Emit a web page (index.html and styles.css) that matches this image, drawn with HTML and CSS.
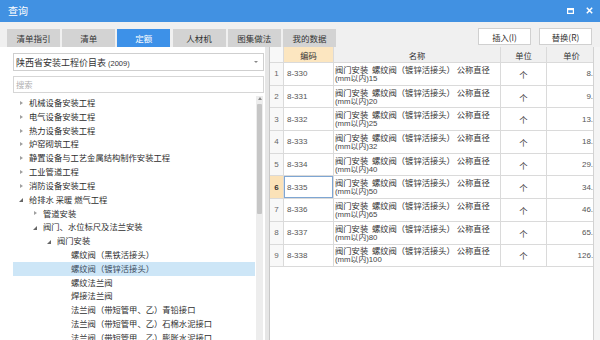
FILE: index.html
```html
<!DOCTYPE html>
<html lang="zh-CN">
<head>
<meta charset="utf-8">
<title>查询</title>
<link rel="stylesheet" href="styles.css">
</head>
<body>
<div class="dialog">
  <header class="titlebar">
    <span class="title">查询</span>
    <div class="win-btns">
      <svg width="7" height="6" viewBox="0 0 7 6"><rect x="0.6" y="0.6" width="5.8" height="4.8" fill="none" stroke="#fff" stroke-width="1.2"/><rect x="0" y="0" width="7" height="2.2" fill="#fff"/></svg>
      <svg width="7" height="7" viewBox="0 0 7 7"><path d="M0.8 0.8L6.2 6.2M6.2 0.8L0.8 6.2" stroke="#fff" stroke-width="1.5"/></svg>
    </div>
  </header>

  <div class="toolbar">
    <nav class="tabs">
      <span class="tab">清单指引</span>
      <span class="tab">清单</span>
      <span class="tab active">定额</span>
      <span class="tab">人材机</span>
      <span class="tab">图集做法</span>
      <span class="tab">我的数据</span>
    </nav>
    <div class="actions">
      <button class="btn">插入(I)</button>
      <button class="btn">替换(R)</button>
    </div>
  </div>

  <div class="main">
    <section class="left">
      <div class="select"><span>陕西省安装工程价目表 <small>(2009)</small></span><span class="caret"></span></div>
      <div class="search">搜索</div>
      <div class="tree-wrap">
        <ul class="tree">
          <li class="l0"><i class="arw closed"></i>机械设备安装工程</li>
          <li class="l0"><i class="arw closed"></i>电气设备安装工程</li>
          <li class="l0"><i class="arw closed"></i>热力设备安装工程</li>
          <li class="l0"><i class="arw closed"></i>炉窑砌筑工程</li>
          <li class="l0"><i class="arw closed"></i>静置设备与工艺金属结构制作安装工程</li>
          <li class="l0"><i class="arw closed"></i>工业管道工程</li>
          <li class="l0"><i class="arw closed"></i>消防设备安装工程</li>
          <li class="l0"><i class="arw open"></i>给排水 采暖 燃气工程</li>
          <li class="l1"><i class="arw closed"></i>管道安装</li>
          <li class="l1"><i class="arw open"></i>阀门、水位标尺及法兰安装</li>
          <li class="l2"><i class="arw open"></i>阀门安装</li>
          <li class="l3"><i class="arw"></i>螺纹阀（黑铁活接头）</li>
          <li class="l3 selected"><i class="arw"></i>螺纹阀（镀锌活接头）</li>
          <li class="l3"><i class="arw"></i>螺纹法兰阀</li>
          <li class="l3"><i class="arw"></i>焊接法兰阀</li>
          <li class="l3"><i class="arw"></i>法兰阀（带短管甲、乙）青铅接口</li>
          <li class="l3"><i class="arw"></i>法兰阀（带短管甲、乙）石棉水泥接口</li>
          <li class="l3"><i class="arw"></i>法兰阀（带短管甲、乙）膨胀水泥接口</li>
        </ul>
        <div class="vscroll"><span class="up"></span><span class="thumb"></span></div>
      </div>
    </section>

    <div class="splitter"></div>

    <section class="grid">
      <div class="grid-view">
        <div class="row head">
          <div class="num"></div>
          <div class="hcode">编码</div>
          <div>名称</div>
          <div>单位</div>
          <div class="hprice">单价</div>
        </div>
        <div class="row"><div class="num">1</div><div class="code">8-330</div><div class="name"><span>阀门安装&nbsp; 螺纹阀（镀锌活接头） 公称直径</span><span class="lat">(mm以内)15</span></div><div class="unit">个</div><div class="price">8.12</div></div>
        <div class="row"><div class="num">2</div><div class="code">8-331</div><div class="name"><span>阀门安装&nbsp; 螺纹阀（镀锌活接头） 公称直径</span><span class="lat">(mm以内)20</span></div><div class="unit">个</div><div class="price">9.14</div></div>
        <div class="row"><div class="num">3</div><div class="code">8-332</div><div class="name"><span>阀门安装&nbsp; 螺纹阀（镀锌活接头） 公称直径</span><span class="lat">(mm以内)25</span></div><div class="unit">个</div><div class="price">13.16</div></div>
        <div class="row"><div class="num">4</div><div class="code">8-333</div><div class="name"><span>阀门安装&nbsp; 螺纹阀（镀锌活接头） 公称直径</span><span class="lat">(mm以内)32</span></div><div class="unit">个</div><div class="price">18.17</div></div>
        <div class="row"><div class="num">5</div><div class="code">8-334</div><div class="name"><span>阀门安装&nbsp; 螺纹阀（镀锌活接头） 公称直径</span><span class="lat">(mm以内)40</span></div><div class="unit">个</div><div class="price">29.58</div></div>
        <div class="row"><div class="num sel">6</div><div class="code focus">8-335</div><div class="name"><span>阀门安装&nbsp; 螺纹阀（镀锌活接头） 公称直径</span><span class="lat">(mm以内)50</span></div><div class="unit">个</div><div class="price">34.17</div></div>
        <div class="row"><div class="num">7</div><div class="code">8-336</div><div class="name"><span>阀门安装&nbsp; 螺纹阀（镀锌活接头） 公称直径</span><span class="lat">(mm以内)65</span></div><div class="unit">个</div><div class="price">46.21</div></div>
        <div class="row"><div class="num">8</div><div class="code">8-337</div><div class="name"><span>阀门安装&nbsp; 螺纹阀（镀锌活接头） 公称直径</span><span class="lat">(mm以内)80</span></div><div class="unit">个</div><div class="price">65.54</div></div>
        <div class="row"><div class="num">9</div><div class="code">8-338</div><div class="name"><span>阀门安装&nbsp; 螺纹阀（镀锌活接头） 公称直径</span><span class="lat">(mm以内)100</span></div><div class="unit">个</div><div class="price">126.19</div></div>
      </div>
      <div class="grid-scroll"></div>
    </section>
  </div>
</div>
</body>
</html>
```

FILE: styles.css
```css
* { box-sizing: border-box; margin: 0; padding: 0; }

html, body {
  width: 600px;
  height: 340px;
  overflow: hidden;
}

body {
  font-family: "Noto Sans CJK SC", "Liberation Sans", sans-serif;
  color: #333;
  background: #f0f0f0;
}

.dialog {
  display: flex;
  flex-direction: column;
  height: 340px;
}

/* title bar */
.titlebar {
  height: 22px;
  flex: none;
  background: #4191e2;
  color: #fff;
  display: flex;
  align-items: center;
  justify-content: space-between;
  padding: 0 7px 0 8px;
}
.title { font-size: 10px; line-height: 22px; }
.win-btns { display: flex; align-items: center; gap: 12px; padding-bottom: 1px; }
.win-btns svg { display: block; }

/* toolbar with tabs */
.toolbar {
  height: 25px;
  flex: none;
  display: flex;
  justify-content: space-between;
  padding: 0 8px 0 7px;
  background: #f0f0f0;
}
.tabs { display: flex; gap: 2.2px; align-items: flex-end; }
.tab {
  width: 53px;
  height: 18px;
  background: #d3d3d3;
  color: #333;
  font-size: 8.5px;
  line-height: 18px;
  text-align: center;
}
.tab.active { background: #3d91e8; color: #fff; }

.actions { display: flex; gap: 8px; padding-top: 6px; }
.btn {
  width: 53px;
  height: 17px;
  background: #fff;
  border: 1px solid #d0d0d0;
  font-family: inherit;
  font-size: 8.3px;
  color: #333;
}

/* main area */
.main { flex: 1; display: flex; min-height: 0; }

.left {
  width: 265px;
  flex: none;
  background: #fff;
  padding: 6px 1px 0 13px;
  display: flex;
  flex-direction: column;
}

.select {
  height: 18px;
  flex: none;
  border: 1px solid #cfcfcf;
  display: flex;
  align-items: center;
  justify-content: space-between;
  padding: 0 5px 0 2px;
  font-size: 9px;
  color: #333;
}
.select small { font-family: "Liberation Sans", sans-serif; font-size: 7.5px; }
.caret {
  width: 0; height: 0;
  border-top: 2.5px solid #888;
  border-left: 2px solid transparent;
  border-right: 2px solid transparent;
}

.search {
  height: 17px;
  flex: none;
  margin-top: 5px;
  border: 1px solid #d6d6d6;
  font-size: 8.3px;
  line-height: 15px;
  color: #b0b0b0;
  padding-left: 2px;
}

.tree-wrap {
  flex: 1;
  display: flex;
  margin-top: 3px;
  margin-right: 1px;
  min-height: 0;
}

.tree { flex: 1; list-style: none; overflow: hidden; }
.tree li {
  height: 13.82px;
  font-size: 8.3px;
  line-height: 13.82px;
  display: flex;
  align-items: center;
  white-space: nowrap;
  margin-right: 1px;
  color: #2e2e2e;
}
.tree li.l0 { padding-left: 6px; }
.tree li.l1 { padding-left: 20px; }
.tree li.l2 { padding-left: 34px; }
.tree li.l3 { padding-left: 48px; }
.tree li.selected { background: #cde6f7; color: #3a4a5c; }

.arw { display: block; flex: none; width: 10px; height: 1px; }
.arw.closed {
  width: 0; height: 0;
  border-left: 3px solid #a0a0a0;
  border-top: 2.5px solid transparent;
  border-bottom: 2.5px solid transparent;
  margin: 0 6px 0 1px;
}
.arw.open {
  width: 0; height: 0;
  border-right: 4px solid #666;
  border-top: 4px solid transparent;
  margin: 1px 6px 0 0;
}

.vscroll {
  width: 7px;
  flex: none;
  background: #ededed;
  display: flex;
  flex-direction: column;
  align-items: center;
}
.vscroll .up {
  width: 0; height: 0;
  margin-top: 1px;
  border-bottom: 3px solid #8a8a8a;
  border-left: 2.5px solid transparent;
  border-right: 2.5px solid transparent;
}
.vscroll .thumb {
  width: 5px;
  height: 110px;
  margin-top: 4px;
  background: #c6c6c6;
  border-radius: 1px;
}

.splitter { width: 4px; flex: none; background: #e6e6e6; }

/* grid */
.grid {
  flex: 1;
  display: flex;
  background: #fff;
  border-left: 1px solid #c8c8c8;
  min-width: 0;
}
.grid-view { flex: 1; overflow: hidden; min-width: 0; }
.grid-scroll {
  width: 7px;
  flex: none;
  background: #f4f4f4;
  border-left: 1px solid #d2d2d2;
}

.row {
  display: grid;
  grid-template-columns: 14px 50px 167px 46px 56px;
  width: 333px;
  height: 22.7px;
  font-size: 8.3px;
  color: #333;
}
.row > div {
  border-right: 1px solid #dadada;
  border-bottom: 1px solid #dadada;
  display: flex;
  align-items: center;
  overflow: hidden;
  white-space: nowrap;
}
.row.head { height: 16px; background: #f0f0f0; }
.row.head > div { justify-content: center; }
.row.head .hcode { background: #fce6c0; }
.row.head .hprice { padding-right: 6px; }

.num {
  justify-content: center;
  background: #f8f8f8;
  color: #666;
  font-family: "Liberation Sans", sans-serif;
  font-size: 8px;
}
.num.sel { background: #fbe2b8; color: #333; font-weight: bold; }

.code {
  padding-left: 3px;
  font-family: "Liberation Sans", sans-serif;
  font-size: 8px;
  color: #555;
}
.code.focus { box-shadow: inset 0 0 0 1px #7ea6d3; }

.name {
  flex-direction: column;
  align-items: flex-start !important;
  justify-content: center;
  padding-left: 1px;
  line-height: 10px;
}
.name .lat { font-family: "Liberation Sans", "Noto Sans CJK SC", sans-serif; font-size: 7.8px; color: #444; }

.unit { justify-content: center; }
.price {
  justify-content: flex-end;
  font-family: "Liberation Sans", sans-serif;
  font-size: 8px;
  color: #555;
}
```
